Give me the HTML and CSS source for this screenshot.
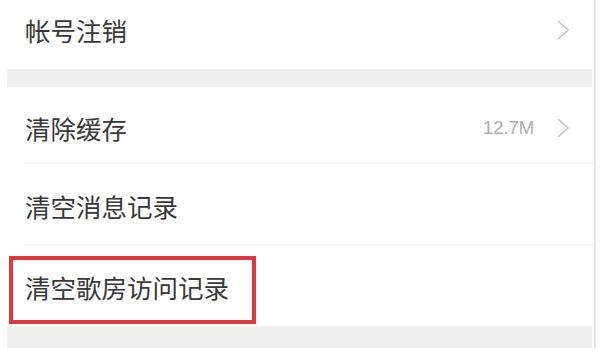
FILE: index.html
```html
<!DOCTYPE html>
<html lang="zh-CN">
<head>
<meta charset="utf-8">
<link rel="stylesheet" href="styles.css">
</head>
<body>
<div class="page">
  <div class="row row-first">
    <span class="label">帐号注销</span>
    <span class="right">
      <svg class="chev" viewBox="0 0 14 22" width="14" height="22"><path d="M2 2 L12 11 L2 20" fill="none" stroke="#c2c2c2" stroke-width="1.6"/></svg>
    </span>
  </div>
  <div class="band"></div>
  <div class="row row-a">
    <span class="label">清除缓存</span>
    <span class="right">
      <span class="value">12.7M</span>
      <svg class="chev" viewBox="0 0 14 22" width="14" height="22"><path d="M2 2 L12 11 L2 20" fill="none" stroke="#c2c2c2" stroke-width="1.6"/></svg>
    </span>
  </div>
  <div class="row row-b">
    <span class="label">清空消息记录</span>
  </div>
  <div class="row row-c">
    <span class="label">清空歌房访问记录</span>
  </div>
  <div class="band band-bottom"></div>
  <div class="highlight"></div>
</div>
</body>
</html>
```

FILE: styles.css
```css
html, body {
  margin: 0;
  padding: 0;
  background: #ffffff;
}

.page {
  position: relative;
  width: 594px;
  height: 348px;
  border-right: 2px solid #e8e8e8;
  background: #ffffff;
  font-family: "Noto Sans CJK SC", "Noto Sans", sans-serif;
  overflow: hidden;
}

.row {
  display: flex;
  align-items: center;
  justify-content: space-between;
  padding: 0 24px 0 25px;
  box-sizing: border-box;
}

.label {
  font-size: 25.5px;
  color: #383838;
  line-height: 1;
}

.right {
  display: flex;
  align-items: center;
  gap: 22px;
}

.value {
  font-family: "Liberation Sans", Arial, sans-serif;
  font-size: 19px;
  color: #b0b0b0;
  letter-spacing: -0.3px;
}

.chev {
  display: block;
}

.row-first {
  height: 60px;
  margin-bottom: 9px;
}

.band {
  margin-left: 7px;
  margin-right: 2px;
  height: 18px;
  background: #efefef;
}

.row-a {
  height: 77px;
  padding-top: 4px;
  position: relative;
}

.row-b {
  height: 82px;
  padding-top: 2px;
  position: relative;
}

.row-c {
  height: 80px;
  padding-top: 2px;
}

.row-a::after,
.row-b::after {
  content: "";
  position: absolute;
  left: 24px;
  right: 0;
  bottom: 0;
  height: 2px;
  background: #f4f4f4;
}

.band-bottom {
  height: 22px;
}

.highlight {
  position: absolute;
  left: 9px;
  top: 256px;
  width: 247px;
  height: 68px;
  box-sizing: border-box;
  border: 4px solid #e0383c;
}
```
